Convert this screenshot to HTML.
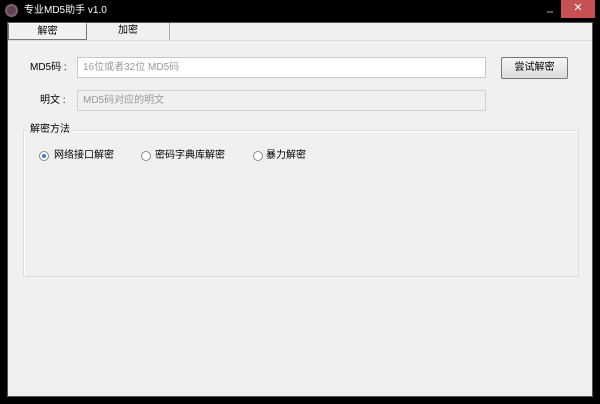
<!DOCTYPE html>
<html><head><meta charset="utf-8"><style>
*{margin:0;padding:0;box-sizing:border-box}
body{width:600px;height:404px;background:#000;position:relative;overflow:hidden;font-family:"Liberation Sans","Noto Sans CJK SC",sans-serif;font-size:10px;color:#000}
.a{position:absolute}
#c{left:7px;top:22px;width:586px;height:375px;background:#f0f0f0;border:1px solid #555}
.t{font-size:10px;line-height:12px}
.in{border:1px solid #c8c8c8;height:21px;color:#999;padding-left:5px;line-height:19px;font-size:10px}
.r{width:10px;height:10px;border:1px solid #8a8a8a;border-radius:50%;background:#fff}
</style></head><body>
<div class="a" style="left:5px;top:4px;width:13px;height:13px;border-radius:50%;background:#5a4550;border:2px solid #806070"></div>
<div class="a t" style="left:24px;top:5px;color:#fff">专业MD5助手 v1.0</div>
<div class="a" style="left:547px;top:11px;width:6px;height:2px;background:#555"></div>
<div class="a" style="left:561px;top:0;width:34px;height:18px;background:#c75050;color:#fff;text-align:center;font-size:11px;line-height:17px">✕</div>
<div id="c" class="a"></div>
<div class="a" style="left:8px;top:23px;width:79px;height:17px;background:#f0f0f0;border:1px solid #777;border-top:1px solid #fff;text-align:center;line-height:15px">解密</div>
<div class="a" style="left:87px;top:23px;width:83px;height:17px;background:#f0f0f0;border-right:1px solid #aaa;text-align:center;line-height:15px">加密</div>
<div class="a" style="left:8px;top:40px;width:584px;height:1px;background:#ddd"></div>
<div class="a t" style="left:30px;top:62px">MD5码 :</div>
<div class="a in" style="left:77px;top:57px;width:409px;background:#fff">16位或者32位 MD5码</div>
<div class="a" style="left:501px;top:57px;width:67px;height:22px;border:1px solid #777;border-radius:2px;background:linear-gradient(#f6f6f6,#dcdcdc);text-align:center;line-height:20px">尝试解密</div>
<div class="a t" style="left:40px;top:95px">明文 :</div>
<div class="a in" style="left:77px;top:90px;width:409px;background:#f0f0f0;border-color:#d0d0d0">MD5码对应的明文</div>
<div class="a" style="left:23px;top:130px;width:556px;height:147px;border:1px solid #dcdcdc;box-shadow:1px 1px 0 #fff inset"></div>
<div class="a t" style="left:28px;top:124px;background:#f0f0f0;padding:0 2px">解密方法</div>
<div class="a r" style="left:39px;top:151px"><div class="a" style="left:2px;top:2px;width:4px;height:4px;border-radius:50%;background:#3a7fd0"></div></div>
<div class="a t" style="left:54px;top:150px">网络接口解密</div>
<div class="a r" style="left:141px;top:151px"></div>
<div class="a t" style="left:155px;top:150px">密码字典库解密</div>
<div class="a r" style="left:253px;top:151px"></div>
<div class="a t" style="left:266px;top:150px">暴力解密</div>
</body></html>
